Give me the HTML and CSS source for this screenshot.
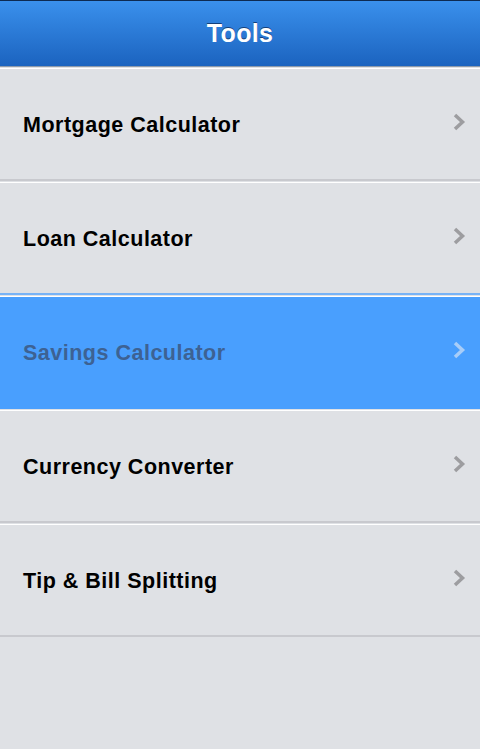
FILE: index.html
```html
<!DOCTYPE html>
<html>
<head>
<meta charset="utf-8">
<link rel="stylesheet" href="styles.css">
</head>
<body>
<header class="bar"><h1 class="bar-title">Tools</h1></header>
<ul class="list">
  <li class="row"><span class="label">Mortgage Calculator</span><svg class="chev" viewBox="0 0 14 20"><path d="M3 3 L10.5 10 L3 17"/></svg></li>
  <li class="row"><span class="label">Loan Calculator</span><svg class="chev" viewBox="0 0 14 20"><path d="M3 3 L10.5 10 L3 17"/></svg></li>
  <li class="row selected"><span class="label">Savings Calculator</span><svg class="chev" viewBox="0 0 14 20"><path d="M3 3 L10.5 10 L3 17"/></svg></li>
  <li class="row"><span class="label">Currency Converter</span><svg class="chev" viewBox="0 0 14 20"><path d="M3 3 L10.5 10 L3 17"/></svg></li>
  <li class="row"><span class="label">Tip &amp; Bill Splitting</span><svg class="chev" viewBox="0 0 14 20"><path d="M3 3 L10.5 10 L3 17"/></svg></li>
</ul>
</body>
</html>
```
FILE: styles.css
```css
html, body {
  margin: 0;
  padding: 0;
  background: #dfe1e5;
  font-family: "Liberation Sans", Arial, sans-serif;
  width: 480px;
  height: 749px;
  overflow: hidden;
}
.bar {
  height: 65px;
  border-top: 1px solid #0d2a52;
  border-bottom: 1px solid #8c9aab;
  background: linear-gradient(#3a90ec, #1b63bf);
  display: flex;
  align-items: center;
  justify-content: center;
}
.bar-title {
  margin: 0;
  color: #fff;
  font-size: 25px;
  letter-spacing: 0.3px;
  font-weight: bold;
  text-shadow: 0 -1px 0 #133f7a;
}
.list {
  list-style: none;
  margin: 0;
  padding: 1px 0 0 0;
}
.row {
  height: 108px;
  border-top: 1px solid #ffffff;
  border-bottom: 2px solid #c8c9ce;
  margin-bottom: 1px;
  display: flex;
  align-items: center;
  justify-content: space-between;
  padding: 2px 14px 0 23px;
}
.label {
  font-size: 21.5px;
  letter-spacing: 0.5px;
  font-weight: bold;
  color: #000;
}
.chev {
  width: 14px;
  height: 20px;
  fill: none;
  stroke: #9d9da0;
  stroke-width: 3.5;
  margin-bottom: 6px;
}
.selected {
  background: #499ffe;
  border-top-color: #ffffff;
  border-bottom-color: #499ffe;
}
.selected .label {
  color: #3d6293;
}
.selected .chev {
  stroke: #a8cdf8;
}
.row:nth-child(2) {
  border-bottom-color: #78b3f6;
}
```
